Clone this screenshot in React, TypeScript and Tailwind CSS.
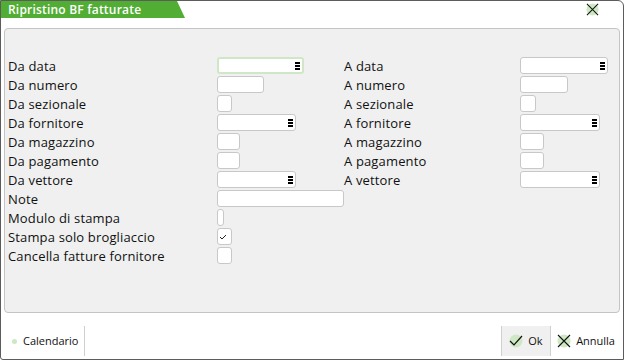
import React from "react";

type Field = { label: string; w: number; menu?: boolean; focus?: boolean };

const rows: [Field, Field | null][] = [
  [{ label: "Da data", w: 87, menu: true, focus: true }, { label: "A data", w: 88, menu: true }],
  [{ label: "Da numero", w: 47 }, { label: "A numero", w: 48 }],
  [{ label: "Da sezionale", w: 15 }, { label: "A sezionale", w: 16 }],
  [{ label: "Da fornitore", w: 79, menu: true }, { label: "A fornitore", w: 80, menu: true }],
  [{ label: "Da magazzino", w: 23 }, { label: "A magazzino", w: 24 }],
  [{ label: "Da pagamento", w: 23 }, { label: "A pagamento", w: 24 }],
  [{ label: "Da vettore", w: 79, menu: true }, { label: "A vettore", w: 80, menu: true }],
  [{ label: "Note", w: 127 }, null],
  [{ label: "Modulo di stampa", w: 7 }, null],
  [{ label: "Stampa solo brogliaccio", w: 15 }, null],
  [{ label: "Cancella fatture fornitore", w: 15 }, null],
];

function MenuIcon() {
  return (
    <svg width="5" height="8" viewBox="0 0 5 8" className="shrink-0">
      <rect x="0" y="0" width="5" height="2" fill="#000" />
      <rect x="0" y="3" width="5" height="2" fill="#000" />
      <rect x="0" y="6" width="5" height="2" fill="#000" />
    </svg>
  );
}

function Input({ f, checked }: { f: Field; checked?: boolean }) {
  return (
    <div
      style={{ width: f.w }}
      className={
        "flex h-[17px] items-center justify-end rounded-[3px] bg-white pr-[2px] " +
        (f.focus ? "border-2 border-[#cfe7c6]" : "border border-[#c8c8c8]")
      }
    >
      {f.menu && <MenuIcon />}
      {checked && (
        <svg width="8" height="6" viewBox="0 0 8 6" className="mr-[2px]">
          <path d="M1 3 L3 5 L7 1" stroke="#222" strokeWidth="1" fill="none" />
        </svg>
      )}
    </div>
  );
}

function GreenX({ size = 14 }: { size?: number }) {
  return (
    <svg width={size} height={size} viewBox="0 0 14 14">
      <circle cx="7" cy="7" r="6.5" fill="#cde8c2" />
      <path d="M1 1 L13 13 M13 1 L1 13" stroke="#111" strokeWidth="1.1" />
    </svg>
  );
}

export default function App() {
  return (
    <div
      className="flex h-[360px] w-[624px] flex-col rounded-tr-[6px] rounded-bl-[3px] border border-[#5c5c5c] bg-white text-[#111]"
      style={{ fontFamily: '"Open Sans", "DejaVu Sans", sans-serif' }}
    >
      <div className="flex h-[27px] items-start justify-between">
        <div
          className="flex h-[17px] w-[184px] items-center bg-[#52ad34] pl-[7px] text-[12px] font-semibold tracking-[0.2px] text-white"
          style={{ clipPath: "polygon(0 0, 176px 0, 184px 100%, 0 100%)" }}
        >
          Ripristino BF fatturate
        </div>
        <div className="mr-[24px] mt-[2px]">
          <GreenX size={13} />
        </div>
      </div>

      <div className="mx-[3px] flex-1 rounded-[4px] border border-[#c4c4c4] bg-[#f0f0f0] pl-[3px] pt-[28px]">
        <div className="flex flex-col gap-[2px] text-[13px] tracking-[0.15px]">
          {rows.map(([l, r], i) => (
            <div key={i} className="grid h-[17px] grid-cols-[209px_127px_176px_auto] items-center">
              <span className="pt-[2px] leading-none">{l.label}</span>
              <div>
                <Input f={l} checked={l.label === "Stampa solo brogliaccio"} />
              </div>
              <span className="pt-[2px] leading-none">{r ? r.label : ""}</span>
              <div>{r && <Input f={r} />}</div>
            </div>
          ))}
        </div>
      </div>

      <div className="flex h-[46px] items-end justify-between pb-[3px] pr-[8px] text-[11px]">
        <div className="flex h-[30px] items-center">
          <span className="ml-[11px] h-[5px] w-[5px] rounded-full bg-[#cde8c2]" />
          <span className="ml-[6px] pr-[6px]">Calendario</span>
          <span className="h-[30px] w-px bg-[#cfcfcf]" />
        </div>
        <div className="flex h-[30px] items-center">
          <div className="flex h-[30px] w-[50px] items-center gap-[5px] border-x border-[#d0d0d0] bg-[#f0f0f0] pl-[7px]">
            <svg width="14" height="14" viewBox="0 0 14 14">
              <circle cx="7" cy="7" r="6.5" fill="#cde8c2" />
              <path d="M1 7 L5 11 L13 2" stroke="#111" strokeWidth="1.2" fill="none" />
            </svg>
            <span>Ok</span>
          </div>
          <div className="flex items-center gap-[5px] pl-[6px]">
            <GreenX size={14} />
            <span>Annulla</span>
          </div>
        </div>
      </div>
    </div>
  );
}
